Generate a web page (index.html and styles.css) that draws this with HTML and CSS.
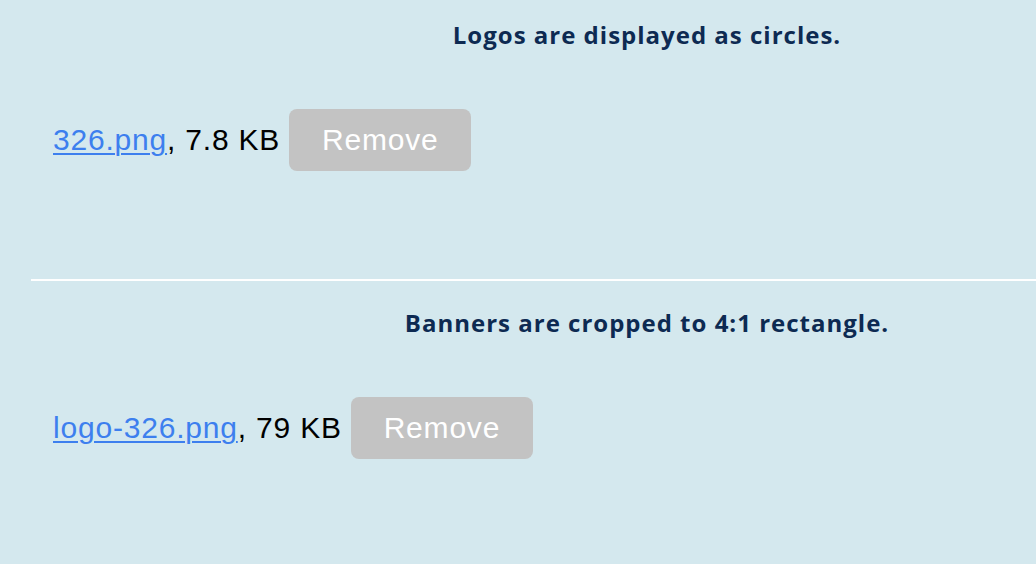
FILE: index.html
```html
<!DOCTYPE html>
<html>
<head>
<meta charset="utf-8">
<link rel="stylesheet" href="styles.css">
</head>
<body>
<div class="page">
  <section class="upload">
    <h2 class="note">Logos are displayed as circles.</h2>
    <div class="file-row"><a class="file-link" href="#">326.png</a>, 7.8 KB <button class="remove-btn">Remove</button></div>
  </section>
  <hr class="divider">
  <section class="upload">
    <h2 class="note">Banners are cropped to 4:1 rectangle.</h2>
    <div class="file-row"><a class="file-link" href="#">logo-326.png</a>, 79 KB <button class="remove-btn">Remove</button></div>
  </section>
</div>
</body>
</html>
```
FILE: styles.css
```css
html, body {
  margin: 0;
  padding: 0;
  overflow: hidden;
}
body {
  background: #d4e8ee;
  width: 1036px;
  height: 564px;
}
.page {
  margin-left: 31px;
  width: 1232px;
}
.upload {
  padding: 20px 0 108px;
}
.note {
  margin: 0;
  text-align: center;
  font-family: "Open Sans", sans-serif;
  font-weight: 700;
  font-size: 24px;
  line-height: 30px;
  letter-spacing: 1px;
  color: #0d2a52;
}
.file-row {
  margin-top: 59px;
  padding-left: 22px;
  font-family: "Liberation Sans", Arial, sans-serif;
  font-size: 30px;
  letter-spacing: 0.8px;
  color: #000;
  line-height: 32px;
  height: 62px;
  display: flex;
  align-items: center;
  white-space: pre;
}
.file-link {
  color: #3d7fee;
  text-decoration: underline;
  text-decoration-thickness: 2px;
  text-underline-offset: 3px;
}
.remove-btn {
  font-family: "Liberation Sans", Arial, sans-serif;
  font-size: 30px;
  line-height: 32px;
  letter-spacing: 0.8px;
  color: #fff;
  background: #c3c3c3;
  border: none;
  border-radius: 8px;
  padding: 15px 0;
  margin: 0;
  height: 62px;
  width: 182px;
  text-align: center;
}
.divider {
  margin: 0 0 7px;
  border: none;
  height: 2px;
  background: #fff;
}
```
